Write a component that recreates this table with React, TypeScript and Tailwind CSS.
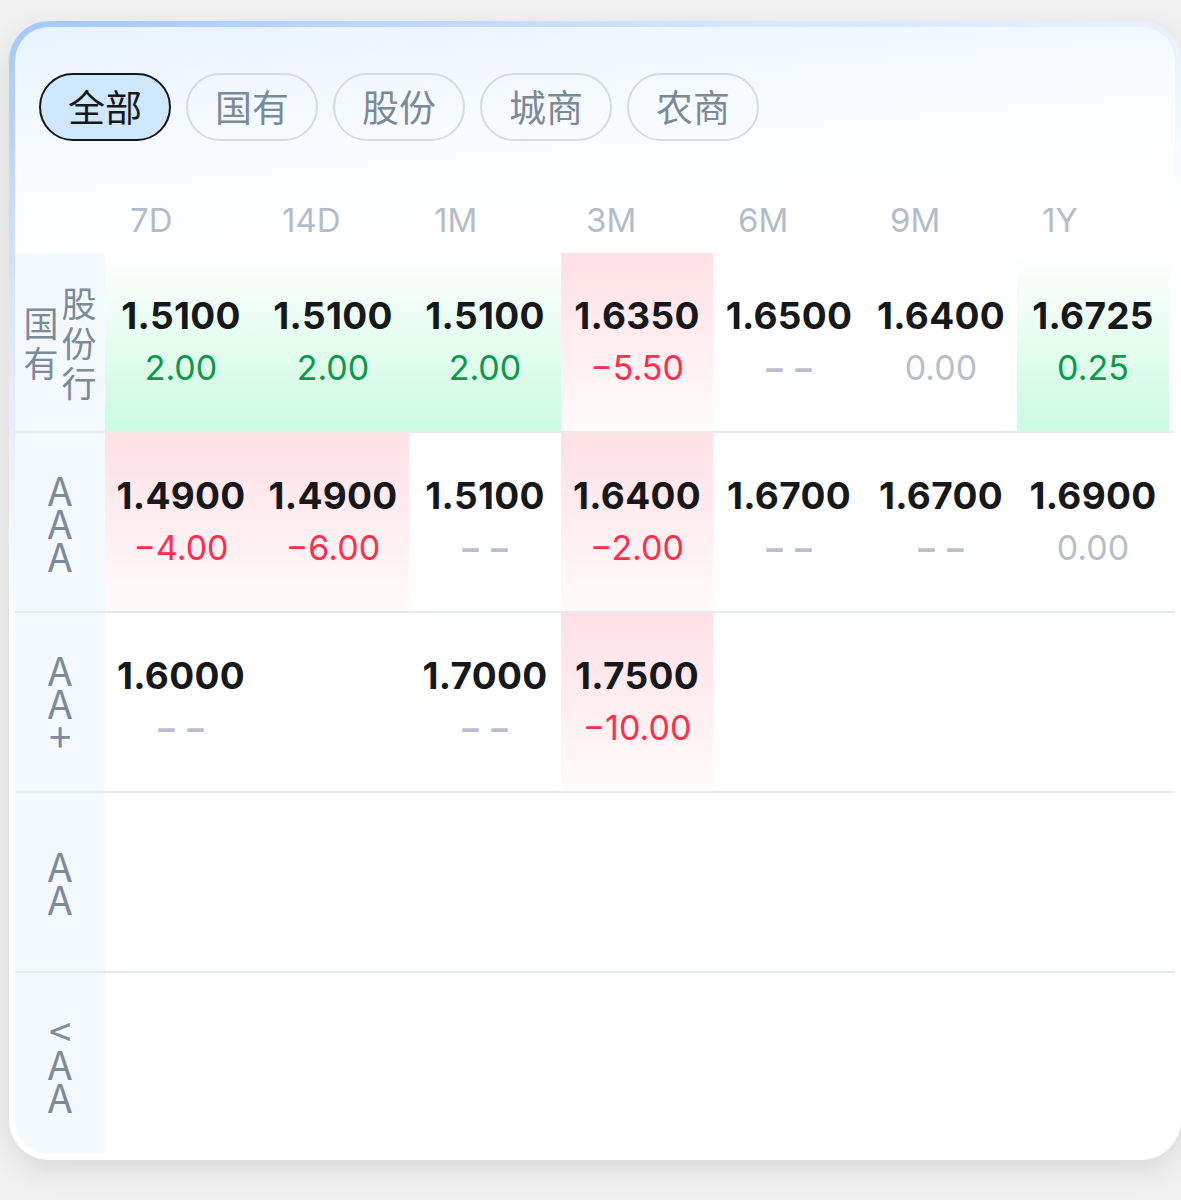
import React from "react"

type Cell = { v: string; c?: string; tone?: "up" | "down" | "flat" } | null

const tabs = ["全部", "国有", "股份", "城商", "农商"]
const terms = ["7D", "14D", "1M", "3M", "6M", "9M", "1Y"]

const rows: { label: string[][]; cells: Cell[] }[] = [
  {
    label: [["国", "有"], ["股", "份", "行"]],
    cells: [
      { v: "1.5100", c: "2.00", tone: "up" },
      { v: "1.5100", c: "2.00", tone: "up" },
      { v: "1.5100", c: "2.00", tone: "up" },
      { v: "1.6350", c: "−5.50", tone: "down" },
      { v: "1.6500", c: "--" },
      { v: "1.6400", c: "0.00", tone: "flat" },
      { v: "1.6725", c: "0.25", tone: "up" },
    ],
  },
  {
    label: [["A", "A", "A"]],
    cells: [
      { v: "1.4900", c: "−4.00", tone: "down" },
      { v: "1.4900", c: "−6.00", tone: "down" },
      { v: "1.5100", c: "--" },
      { v: "1.6400", c: "−2.00", tone: "down" },
      { v: "1.6700", c: "--" },
      { v: "1.6700", c: "--" },
      { v: "1.6900", c: "0.00", tone: "flat" },
    ],
  },
  {
    label: [["A", "A", "+"]],
    cells: [
      { v: "1.6000", c: "--" },
      null,
      { v: "1.7000", c: "--" },
      { v: "1.7500", c: "−10.00", tone: "down" },
      null,
      null,
      null,
    ],
  },
  { label: [["A", "A"]], cells: [null, null, null, null, null, null, null] },
  { label: [["<", "A", "A"]], cells: [null, null, null, null, null, null, null] },
]

function DataCell({ cell }: { cell: Cell }) {
  if (!cell) return <div />
  const bg =
    cell.tone === "up"
      ? "bg-[linear-gradient(180deg,rgba(255,255,255,0)_0%,#cbfbe1_100%)]"
      : cell.tone === "down"
      ? "bg-[linear-gradient(180deg,#ffe0e5_0%,rgba(255,240,243,0.3)_100%)]"
      : ""
  const color =
    cell.tone === "up"
      ? "text-[#0a9a4a]"
      : cell.tone === "down"
      ? "text-[#ff2d4e]"
      : "text-[#b6bfcb]"
  return (
    <div className={`flex flex-col items-center pt-[41px] ${bg}`}>
      <div className="text-[37px] leading-[44px] font-bold text-[#16181b] tracking-[0.3px]">{cell.v}</div>
      <div className={`mt-[6px] text-[34px] leading-[48px] ${color}`}>
        {cell.c === "--" ? <span className="font-semibold tracking-[6px] pl-[6px]">−−</span> : cell.c}
      </div>
    </div>
  )
}

export default function App() {
  return (
    <div
      className="min-h-[1200px] bg-[#f1f1f1] pl-[9px] pt-[21px]"
      style={{ fontFamily: "Inter, 'Noto Sans CJK SC', sans-serif" }}
    >
      <div className="w-[1172px] h-[1139px] rounded-[40px] p-[6px] bg-[linear-gradient(160deg,#a4c7fb_0%,#d7e7fd_18%,#ffffff_40%)] shadow-[0_10px_28px_rgba(0,0,0,0.10)]">
        <div className="h-full rounded-[34px] overflow-hidden bg-[linear-gradient(175deg,#e7f3ff_0%,#f6faff_120px,#ffffff_230px)]">
          <div className="flex gap-[15px] pl-[24px] pt-[46px]">
            {tabs.map((t, i) => (
              <div
                key={t}
                className={
                  i === 0
                    ? "w-[132px] h-[68px] rounded-full border-[2.5px] border-[#15171a] bg-[#cfe8fe] flex items-center justify-center text-[37px] text-[#15171a]"
                    : "w-[132px] h-[68px] rounded-full border-2 border-[#d5dce4] flex items-center justify-center text-[37px] text-[#7b8a98]"
                }
                style={{ fontFamily: "'Noto Sans CJK SC', sans-serif" }}
              >
                {t}
              </div>
            ))}
          </div>
          <div className="grid grid-cols-[90px_repeat(7,152px)] h-[112px] items-end pb-[13px]">
            <div />
            {terms.map((t) => (
              <div key={t} className="pl-[25px] text-[33px] leading-[40px] text-[#b3bdca]">
                {t}
              </div>
            ))}
          </div>
          {rows.map((r, ri) => (
            <div
              key={ri}
              className={`grid grid-cols-[90px_repeat(7,152px)] h-[180px] ${ri < 4 ? "border-b-2 border-[#e6ebf0]" : ""}`}
            >
              <div
                className="bg-[#f4f9ff] flex items-center justify-center gap-[3px] text-[#7b8b9a]"
                style={{ fontFamily: "'Noto Sans CJK SC', sans-serif" }}
              >
                {r.label.map((col, ci) => (
                  <div
                    key={ci}
                    className={`flex flex-col items-center ${r.label.length > 1 ? "text-[35px] leading-[40px]" : "text-[40px] leading-[33px]"}`}
                  >
                    {col.map((ch, k) => (
                      <span key={k}>{ch}</span>
                    ))}
                  </div>
                ))}
              </div>
              {r.cells.map((c, ci) => (
                <DataCell key={ci} cell={c} />
              ))}
            </div>
          ))}
        </div>
      </div>
    </div>
  )
}
